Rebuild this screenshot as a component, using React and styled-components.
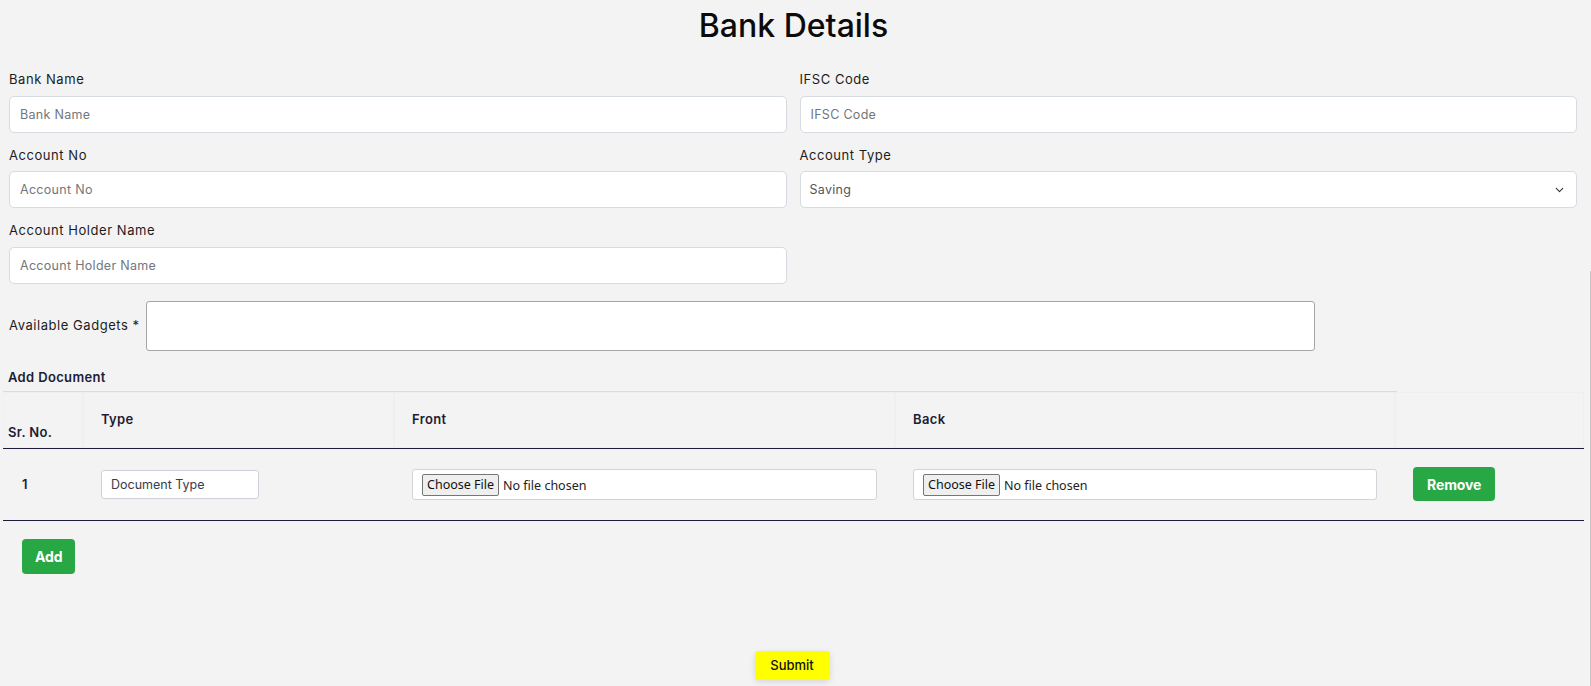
import React from "react";
import styled, { createGlobalStyle } from "styled-components";
import { ChevronDown } from "lucide-react";

const GlobalStyle = createGlobalStyle`
	html, body {
		margin: 0;
		background: #f3f3f3;
	}
	body {
		font-family: Inter, "Noto Sans", sans-serif;
		color: #212529;
	}
	* {
		box-sizing: border-box;
	}
`;

const Page = styled.div`
	position: relative;
	min-height: 100vh;
	padding: 0 7px 20px 3px;

	&::after {
		content: "";
		position: absolute;
		top: 264px;
		right: 0;
		bottom: 0;
		width: 1px;
		background: #c6c6c6;
	}
`;

const Title = styled.h1`
	margin: 7px 0 0;
	text-align: center;
	font-size: 32px;
	line-height: 1.2;
	font-weight: 500;
	color: #0b0b0b;
`;

const Form = styled.div`
	padding: 25px 7px 0 6px;
`;

const FieldGrid = styled.div`
	display: grid;
	grid-template-columns: 1fr 1fr;
	column-gap: 13px;
	row-gap: 13px;
`;

const Field = styled.div`
	display: flex;
	flex-direction: column;
	gap: 6px;
`;

const Label = styled.label`
	font-size: 13px;
	line-height: 19.5px;
	letter-spacing: 0.55px;
	color: #1c1c1c;
`;

const TextInput = styled.input`
	height: 37px;
	width: 100%;
	padding: 0 10px;
	border: 1px solid #d6dae1;
	border-radius: 5px;
	background: #fff;
	font-family: inherit;
	font-size: 12.5px;
	letter-spacing: 0.3px;
	color: #333;
	outline: none;

	&::placeholder {
		color: #72767d;
	}
`;

const SelectWrap = styled.div`
	position: relative;
`;

const Select = styled.select`
	appearance: none;
	height: 37px;
	width: 100%;
	padding: 0 9px;
	border: 1px solid #d6dae1;
	border-radius: 5px;
	background: #fff;
	font-family: inherit;
	font-size: 12.5px;
	letter-spacing: 0.3px;
	color: #555;
	outline: none;
`;

const Chevron = styled(ChevronDown)`
	position: absolute;
	right: 11px;
	top: 50%;
	transform: translateY(-50%);
	pointer-events: none;
	color: #333;
`;

const GadgetRow = styled.div`
	display: flex;
	align-items: center;
	gap: 6px;
	margin-top: 17px;
`;

const GadgetBox = styled.textarea`
	width: 1169px;
	height: 50px;
	border: 1px solid #a6a6a6;
	border-radius: 3px;
	background: #fff;
	resize: none;
	font-family: inherit;
	outline: none;
`;

const DocumentSection = styled.section`
	margin-top: 12px;
`;

const Caption = styled.div`
	width: 1394px;
	padding: 5px 0 4px 5px;
	border-bottom: 1px solid #dcdcdc;
	font-size: 13px;
	line-height: 19.5px;
	font-weight: 600;
	letter-spacing: 0.35px;
	color: #1d1d33;
`;

const Table = styled.table`
	width: 100%;
	border-collapse: collapse;
	table-layout: fixed;
`;

const HeadCell = styled.th`
	height: 56px;
	padding: 0 18px;
	padding-left: ${(p) => (p.$first ? "5px" : "18px")};
	padding-bottom: ${(p) => (p.$first ? "5px" : "0")};
	vertical-align: ${(p) => (p.$first ? "bottom" : "middle")};
	text-align: left;
	font-size: 13px;
	line-height: 19.5px;
	font-weight: 600;
	letter-spacing: 0.35px;
	color: #1d1d33;
	border-bottom: 1px solid #1f1b3a;
	box-shadow: inset 0 0 0 1px #efefef;
`;

const Cell = styled.td`
	height: 72px;
	padding: 0 18px;
	padding-left: ${(p) => (p.$first ? "19px" : "18px")};
	vertical-align: middle;
	font-size: 13px;
	font-weight: 600;
	color: #1d1d33;
	border-bottom: 1px solid #1f1b3a;
`;

const SmallInput = styled.input`
	width: 158px;
	height: 29px;
	padding: 0 9px;
	border: 1px solid #ccd1d9;
	border-radius: 3px;
	background: #fff;
	font-family: inherit;
	font-size: 12.5px;
	outline: none;

	&::placeholder {
		color: #3a3a4a;
	}
`;

const FileInput = styled.input`
	width: 100%;
	height: 31px;
	padding: 4px 9px;
	border: 1px solid #d0d3d8;
	border-radius: 3px;
	background: #fff;
	font-family: "Noto Sans", sans-serif;
	font-size: 12.5px;
	color: #222;

	&::file-selector-button {
		height: 22px;
		margin-right: 4px;
		padding: 0 4px;
		border: 1px solid #767676;
		border-radius: 2px;
		background: #efefef;
		font-family: "Noto Sans", sans-serif;
		font-size: 12.5px;
		color: #111;
	}
`;

const GreenButton = styled.button`
	height: ${(p) => p.$height || "35px"};
	padding: 0 ${(p) => p.$pad || "13px"};
	border: none;
	border-radius: 4px;
	background: #28a745;
	color: #fff;
	font-family: inherit;
	font-size: 14px;
	font-weight: 700;
	letter-spacing: -0.1px;
	cursor: pointer;
`;

const AddButton = styled(GreenButton)`
	margin: 18px 0 0 19px;
`;

const SubmitRow = styled.div`
	display: flex;
	justify-content: center;
	margin-top: 77px;
`;

const SubmitButton = styled.button`
	width: 75px;
	height: 29px;
	margin-left: -3px;
	border: none;
	border-radius: 4px;
	background: #ffff00;
	box-shadow: 0 2px 6px rgba(0, 0, 0, 0.12);
	font-family: inherit;
	font-size: 13px;
	font-weight: 500;
	color: #111;
	cursor: pointer;
`;

const App = () => (
	<Page>
		<GlobalStyle />
		<Title>Bank Details</Title>
		<Form>
			<FieldGrid>
				<Field>
					<Label>Bank Name</Label>
					<TextInput placeholder="Bank Name" />
				</Field>
				<Field>
					<Label>IFSC Code</Label>
					<TextInput placeholder="IFSC Code" />
				</Field>
				<Field>
					<Label>Account No</Label>
					<TextInput placeholder="Account No" />
				</Field>
				<Field>
					<Label>Account Type</Label>
					<SelectWrap>
						<Select defaultValue="Saving">
							<option>Saving</option>
							<option>Current</option>
						</Select>
						<Chevron size={13} strokeWidth={2} />
					</SelectWrap>
				</Field>
				<Field>
					<Label>Account Holder Name</Label>
					<TextInput placeholder="Account Holder Name" />
				</Field>
			</FieldGrid>
			<GadgetRow>
				<Label>Available Gadgets *</Label>
				<GadgetBox />
			</GadgetRow>
		</Form>
		<DocumentSection>
			<Caption>Add Document</Caption>
			<Table>
				<colgroup>
					<col style={{ width: 80 }} />
					<col style={{ width: 311 }} />
					<col style={{ width: 501 }} />
					<col style={{ width: 500 }} />
					<col style={{ width: 189 }} />
				</colgroup>
				<thead>
					<tr>
						<HeadCell $first>Sr. No.</HeadCell>
						<HeadCell>Type</HeadCell>
						<HeadCell>Front</HeadCell>
						<HeadCell>Back</HeadCell>
						<HeadCell />
					</tr>
				</thead>
				<tbody>
					<tr>
						<Cell $first>1</Cell>
						<Cell>
							<SmallInput placeholder="Document Type" />
						</Cell>
						<Cell>
							<FileInput type="file" />
						</Cell>
						<Cell>
							<FileInput type="file" />
						</Cell>
						<Cell>
							<GreenButton $height="34px" $pad="14px">Remove</GreenButton>
						</Cell>
					</tr>
				</tbody>
			</Table>
			<AddButton>Add</AddButton>
		</DocumentSection>
		<SubmitRow>
			<SubmitButton>Submit</SubmitButton>
		</SubmitRow>
	</Page>
);

export default App;
